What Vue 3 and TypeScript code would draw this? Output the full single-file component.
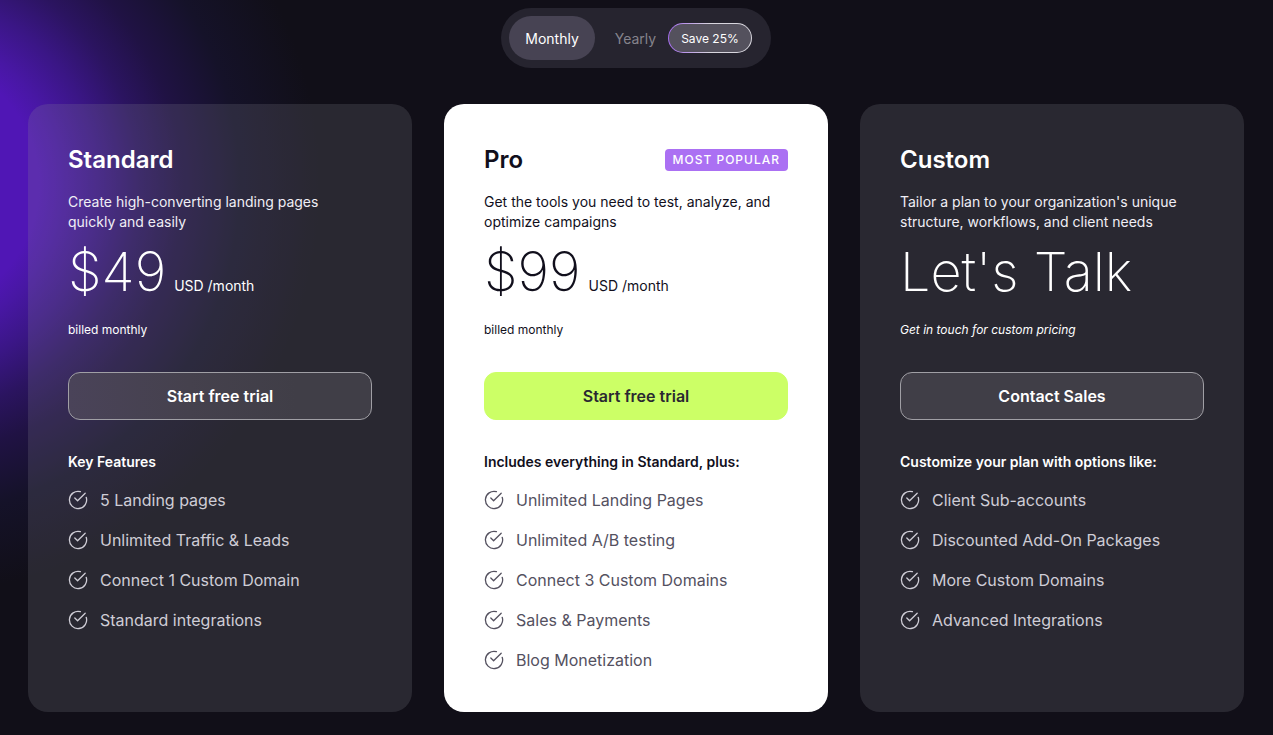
<script setup lang="ts">
import { ref } from 'vue'

type Billing = 'monthly' | 'yearly'

interface Plan {
  id: string
  name: string
  badge?: string
  description: string
  price: string
  unit?: string
  note: string
  action: string
  featuresTitle: string
  features: string[]
}

const billing = ref<Billing>('monthly')

const plans: Plan[] = [
  {
    id: 'standard',
    name: 'Standard',
    description: 'Create high-converting landing pages quickly and easily',
    price: '$49',
    unit: 'USD /month',
    note: 'billed monthly',
    action: 'Start free trial',
    featuresTitle: 'Key Features',
    features: [
      '5 Landing pages',
      'Unlimited Traffic & Leads',
      'Connect 1 Custom Domain',
      'Standard integrations',
    ],
  },
  {
    id: 'pro',
    name: 'Pro',
    badge: 'MOST POPULAR',
    description: 'Get the tools you need to test, analyze, and optimize campaigns',
    price: '$99',
    unit: 'USD /month',
    note: 'billed monthly',
    action: 'Start free trial',
    featuresTitle: 'Includes everything in Standard, plus:',
    features: [
      'Unlimited Landing Pages',
      'Unlimited A/B testing',
      'Connect 3 Custom Domains',
      'Sales & Payments',
      'Blog Monetization',
    ],
  },
  {
    id: 'custom',
    name: 'Custom',
    description: "Tailor a plan to your organization's unique structure, workflows, and client needs",
    price: "Let's Talk",
    note: 'Get in touch for custom pricing',
    action: 'Contact Sales',
    featuresTitle: 'Customize your plan with options like:',
    features: [
      'Client Sub-accounts',
      'Discounted Add-On Packages',
      'More Custom Domains',
      'Advanced Integrations',
    ],
  },
]
</script>

<template>
  <main class="pricing">
    <div class="toggle" role="group" aria-label="Billing period">
      <button
        type="button"
        class="toggle-option"
        :class="{ active: billing === 'monthly' }"
        :aria-pressed="billing === 'monthly'"
        @click="billing = 'monthly'"
      >
        Monthly
      </button>
      <button
        type="button"
        class="toggle-option with-badge"
        :class="{ active: billing === 'yearly' }"
        :aria-pressed="billing === 'yearly'"
        @click="billing = 'yearly'"
      >
        Yearly
        <span class="save">Save 25%</span>
      </button>
    </div>

    <div class="plans">
      <article v-for="plan in plans" :key="plan.id" class="card" :class="plan.id">
        <header class="card-head">
          <h2 class="name">{{ plan.name }}</h2>
          <span v-if="plan.badge" class="badge">{{ plan.badge }}</span>
        </header>
        <p class="description">{{ plan.description }}</p>
        <p class="price">
          <span class="amount">{{ plan.price }}</span>
          <span v-if="plan.unit" class="unit">{{ plan.unit }}</span>
        </p>
        <p class="note">{{ plan.note }}</p>
        <button type="button" class="action">{{ plan.action }}</button>
        <h3 class="features-title">{{ plan.featuresTitle }}</h3>
        <ul class="features">
          <li v-for="feature in plan.features" :key="feature" class="feature">
            <svg class="check" viewBox="0 0 20 20" aria-hidden="true">
              <path d="M12.4 1.7A8.6 8.6 0 1 0 18.2 7.3" />
              <path d="M6.8 8L9.6 10.8L17.2 3.2" />
            </svg>
            {{ feature }}
          </li>
        </ul>
      </article>
    </div>
  </main>
</template>

<style>
body {
  margin: 0;
  background: #110f18;
}
</style>

<style scoped>
.pricing {
  box-sizing: border-box;
  min-height: 100vh;
  padding: 8px 29px 23px 28px;
  display: flex;
  flex-direction: column;
  align-items: center;
  gap: 36px;
  font-family: Inter, "Liberation Sans", sans-serif;
  color: #fff;
  background:
    radial-gradient(
      circle at -90px 185px,
      #5016b5 0,
      #5016b5 128px,
      #4817a4 152px,
      #3a1685 190px,
      #2b1460 230px,
      #201244 270px,
      #151229 330px,
      #110f18 410px
    ),
    #110f18;
}

.toggle {
  display: flex;
  padding: 8px;
  border-radius: 30px;
  background: #26242f;
}

.toggle-option {
  height: 44px;
  padding: 0 16px;
  display: flex;
  align-items: center;
  border: 0;
  border-radius: 22px;
  background: transparent;
  color: #85838c;
  font-family: inherit;
  font-size: 14px;
  cursor: pointer;
}

.toggle-option.active {
  background: #474353;
  color: #fff;
}

.with-badge {
  gap: 12px;
  padding: 0 11px 0 20px;
}

.save {
  height: 28px;
  padding: 0 12px;
  display: flex;
  align-items: center;
  border: 1px solid transparent;
  border-radius: 15px;
  background:
    linear-gradient(#54515d, #54515d) padding-box,
    linear-gradient(90deg, #a56bf0, #d8d6de 50%) border-box;
  color: #fff;
  font-size: 12px;
}

.plans {
  width: 100%;
  display: grid;
  grid-template-columns: repeat(3, minmax(0, 1fr));
  gap: 32px;
}

.card {
  padding: 40px;
  border-radius: 20px;
  background: rgba(141, 138, 149, 0.2);
}

.pro {
  background: #fff;
  color: #110f1c;
}

.card-head {
  display: flex;
  align-items: center;
  justify-content: space-between;
}

.name {
  margin: 0;
  font-size: 24px;
  font-weight: 600;
  line-height: 32px;
}

.badge {
  padding: 0 8px;
  border-radius: 4px;
  background: #ab70f3;
  color: #fff;
  font-size: 12px;
  font-weight: 500;
  letter-spacing: 1px;
  line-height: 22px;
}

.description {
  max-width: 292px;
  margin: 16px 0 8px;
  font-size: 14px;
  line-height: 20px;
}

.standard .description,
.custom .description {
  color: #f0eef5;
}

.price {
  height: 64px;
  margin: 0 0 16px;
  display: flex;
  align-items: baseline;
  gap: 8px;
}

.amount {
  font-size: 54px;
  font-weight: 200;
  line-height: 64px;
}

.unit {
  font-size: 14px;
  line-height: 20px;
}

.note {
  margin: 0 0 32px;
  font-size: 12px;
  line-height: 20px;
}

.custom .note {
  font-style: italic;
}

.action {
  width: 100%;
  height: 48px;
  display: block;
  border: 1px solid #a09fa5;
  border-radius: 12px;
  background: #403e47;
  color: #fff;
  font-family: inherit;
  font-size: 16px;
  font-weight: 600;
  cursor: pointer;
}

.standard .action {
  background: linear-gradient(90deg, #4a4359, #45414d 40%, #403e47 75%);
}

.pro .action {
  border-color: #cf6;
  background: #cf6;
  color: #2a2831;
}

.features-title {
  margin: 32px 0 16px;
  font-size: 14px;
  font-weight: 600;
  line-height: 20px;
}

.features {
  margin: 0;
  padding: 0;
  display: grid;
  gap: 16px;
  list-style: none;
}

.feature {
  display: flex;
  align-items: center;
  gap: 12px;
  color: #cfcdd6;
  font-size: 16px;
  line-height: 24px;
}

.pro .feature {
  color: #54515f;
}

.check {
  width: 20px;
  height: 20px;
  flex: none;
  fill: none;
  stroke: currentColor;
  stroke-width: 1.3;
  stroke-linecap: round;
  stroke-linejoin: round;
}
</style>
